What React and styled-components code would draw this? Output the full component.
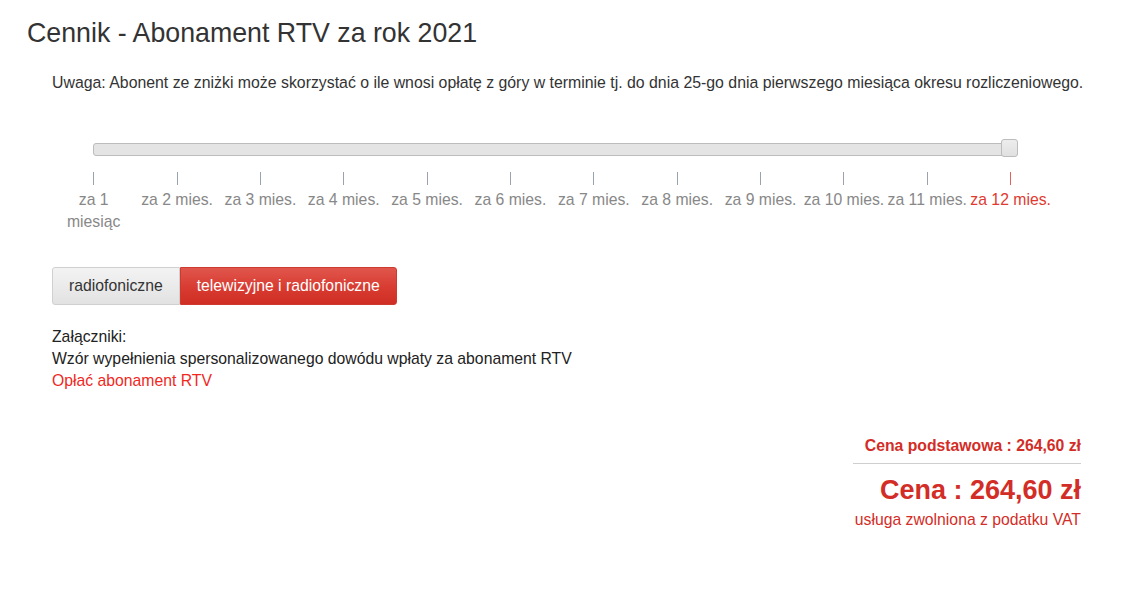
import styled, { createGlobalStyle } from 'styled-components'

const GlobalStyle = createGlobalStyle`
  body {
    margin: 0;
    background: #fff;
    font-family: "Liberation Sans", Arial, sans-serif;
    color: #333;
  }
`

const months = [
  'za 1 miesiąc', 'za 2 mies.', 'za 3 mies.', 'za 4 mies.', 'za 5 mies.', 'za 6 mies.',
  'za 7 mies.', 'za 8 mies.', 'za 9 mies.', 'za 10 mies.', 'za 11 mies.', 'za 12 mies.'
]

const Page = styled.div`
  padding: 17px 0 0 27px;
  width: 1060px;
`

const Title = styled.h1`
  margin: 0;
  font-size: 26.75px;
  font-weight: normal;
  line-height: 32px;
  color: #333;
`

const Content = styled.div`
  padding: 0 0 0 25px;
`

const Notice = styled.p`
  margin: 23px 0 0;
  font-size: 15.85px;
  line-height: 22px;
  color: #333;
  white-space: nowrap;
`

const SliderWrap = styled.div`
  margin: 49px 0 0 41px;
  width: 925px;
  position: relative;
`

const Track = styled.div`
  height: 11px;
  background: #e4e4e4;
  border: 1px solid #bcbcbc;
  border-radius: 3px;
`

const Handle = styled.span`
  position: absolute;
  right: 0;
  top: -4px;
  width: 15px;
  height: 16px;
  background: linear-gradient(#ededed, #e0e0e0);
  border: 1px solid #bcbcbc;
  border-radius: 3px;
`

const Pips = styled.div`
  display: grid;
  grid-template-columns: repeat(12, 83.36px);
  margin-top: 16px;
`

const Pip = styled.div`
  display: flex;
  flex-direction: column;
  align-items: center;
  text-align: center;
  color: ${p => (p.$active ? '#e03a30' : '#888')};
  font-size: 15.75px;
  line-height: 22px;
`

const Tick = styled.span`
  width: 1px;
  height: 13px;
  background: ${p => (p.$active ? '#e0605a' : '#9aa3ad')};
  margin-bottom: 4px;
`

const Tabs = styled.div`
  display: flex;
  margin-top: 34px;
`

const Tab = styled.button`
  font-family: inherit;
  font-size: 15.75px;
  height: 38px;
  padding: 0 16px;
  cursor: pointer;
  border: 1px solid ${p => (p.$active ? '#cf3a30' : '#d0d0d0')};
  color: ${p => (p.$active ? '#fff' : '#333')};
  background: ${p => (p.$active
    ? 'linear-gradient(#e0564c, #d83b31 55%, #cf2e24)'
    : 'linear-gradient(#f3f3f3, #e2e2e2)')};
  border-radius: ${p => (p.$first ? '3px 0 0 3px' : '0 3px 3px 0')};
`

const Attachments = styled.div`
  margin-top: 21px;
  font-size: 15.75px;
  line-height: 22px;
  display: flex;
  flex-direction: column;
  align-items: flex-start;
`

const Plain = styled.span`
  color: #222;
`

const Link = styled.a`
  color: #f0281e;
  text-decoration: none;
`

const PriceBox = styled.div`
  margin: 43px 6px 0 auto;
  width: 228px;
  text-align: right;
  color: #d32d27;
`

const BasePrice = styled.div`
  font-weight: bold;
  font-size: 15.75px;
  line-height: 22px;
  padding-bottom: 6px;
  border-bottom: 1px solid #cfcfcf;
`

const Price = styled.div`
  font-weight: bold;
  font-size: 27px;
  line-height: 32px;
  margin-top: 10px;
`

const Vat = styled.div`
  font-size: 15.75px;
  line-height: 22px;
  margin-top: 3px;
`

export default function App() {
  return (
    <>
      <GlobalStyle />
      <Page>
        <Title>Cennik - Abonament RTV za rok 2021</Title>
        <Content>
          <Notice>
            Uwaga: Abonent ze zniżki może skorzystać o ile wnosi opłatę z góry w terminie tj. do dnia 25-go dnia pierwszego miesiąca okresu rozliczeniowego.
          </Notice>
          <SliderWrap>
            <Track />
            <Handle />
          </SliderWrap>
          <Pips>
            {months.map((m, i) => (
              <Pip key={m} $active={i === months.length - 1}>
                <Tick $active={i === months.length - 1} />
                {m}
              </Pip>
            ))}
          </Pips>
          <Tabs>
            <Tab $first>radiofoniczne</Tab>
            <Tab $active>telewizyjne i radiofoniczne</Tab>
          </Tabs>
          <Attachments>
            <Plain>Załączniki:</Plain>
            <Plain>Wzór wypełnienia spersonalizowanego dowódu wpłaty za abonament RTV</Plain>
            <Link href="#">Opłać abonament RTV</Link>
          </Attachments>
          <PriceBox>
            <BasePrice>Cena podstawowa : 264,60 zł</BasePrice>
            <Price>Cena : 264,60 zł</Price>
            <Vat>usługa zwolniona z podatku VAT</Vat>
          </PriceBox>
        </Content>
      </Page>
    </>
  )
}
